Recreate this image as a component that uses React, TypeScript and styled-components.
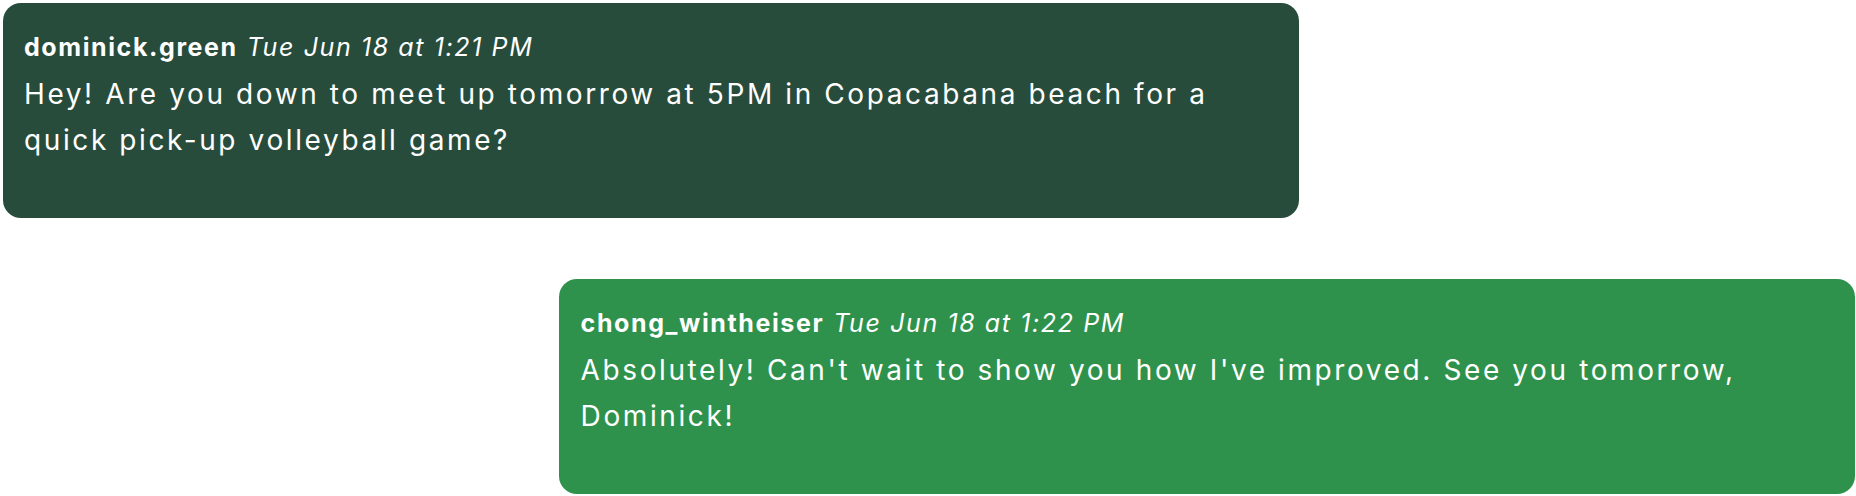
import styled, { createGlobalStyle } from "styled-components";

const GlobalStyle = createGlobalStyle`
  body {
    margin: 0;
    background: #ffffff;
    font-family: Inter, "Noto Sans", sans-serif;
  }
`;

const Thread = styled.div`
  display: flex;
  flex-direction: column;
  gap: 61px;
  padding: 3px 1px 2px 3px;
`;

const Bubble = styled.div<{ $mine?: boolean }>`
  box-sizing: border-box;
  width: 70%;
  align-self: ${(p) => (p.$mine ? "flex-end" : "flex-start")};
  background: ${(p) => (p.$mine ? "#2e924c" : "#274c3b")};
  color: #ffffff;
  border-radius: 18px;
  padding: 30px 21px 38px ${(p) => (p.$mine ? "22px" : "21px")};
  min-height: 215px;
`;

const Header = styled.div`
  display: flex;
  align-items: baseline;
  gap: 9px;
  font-size: 25px;
  line-height: 28px;
  letter-spacing: 1.6px;
`;

const Author = styled.span`
  font-weight: 700;
`;

const Time = styled.span`
  font-style: italic;
  font-weight: 400;
`;

const Body = styled.p`
  margin: 10px 0 0;
  font-size: 28px;
  line-height: 46px;
  letter-spacing: 2.6px;
`;

const messages = [
  {
    author: "dominick.green",
    time: "Tue Jun 18 at 1:21 PM",
    text: "Hey! Are you down to meet up tomorrow at 5PM in Copacabana beach for a quick pick-up volleyball game?",
    mine: false,
  },
  {
    author: "chong_wintheiser",
    time: "Tue Jun 18 at 1:22 PM",
    text: "Absolutely! Can't wait to show you how I've improved. See you tomorrow, Dominick!",
    mine: true,
  },
];

export default function App() {
  return (
    <>
      <GlobalStyle />
      <Thread>
        {messages.map((m) => (
          <Bubble key={m.author} $mine={m.mine}>
            <Header>
              <Author>{m.author}</Author>
              <Time>{m.time}</Time>
            </Header>
            <Body>{m.text}</Body>
          </Bubble>
        ))}
      </Thread>
    </>
  );
}
